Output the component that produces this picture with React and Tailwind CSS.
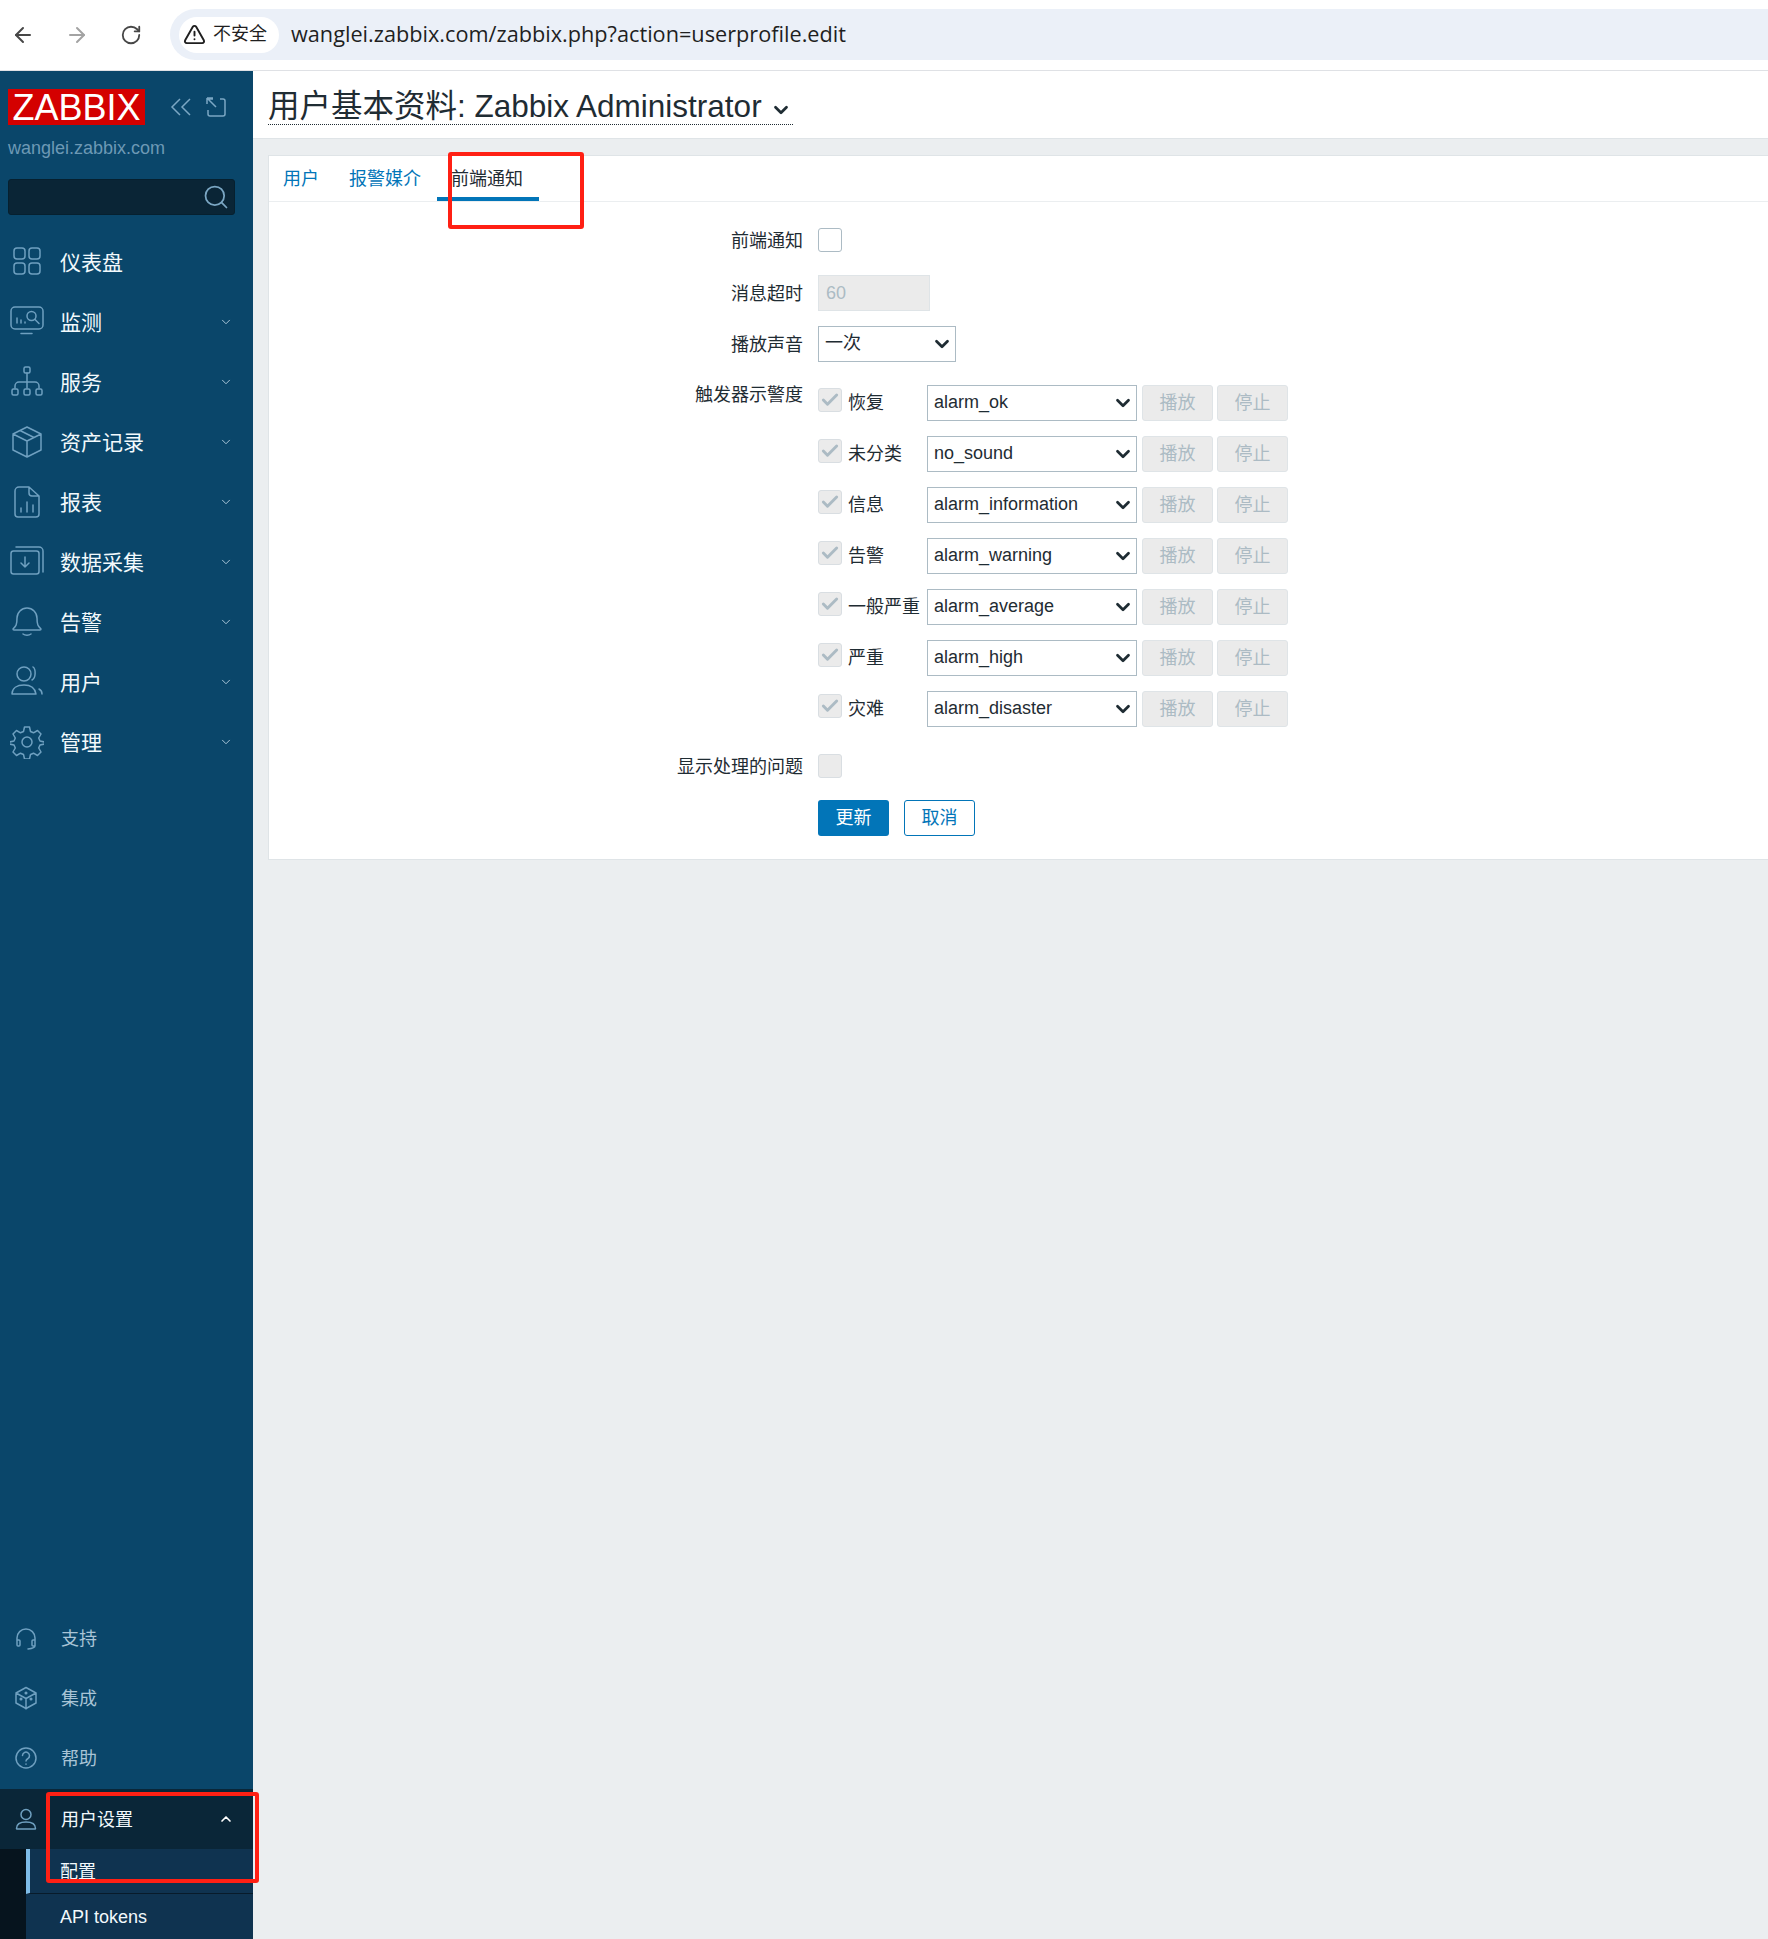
import { ArrowLeft, ArrowRight, RotateCw, TriangleAlert, Search, ChevronDown, ChevronUp, Check } from 'lucide-react'

const FONT = 'font-["Liberation_Sans","Noto_Sans_CJK_SC",sans-serif]'

function Ico({ children, size = 34, vb = 34 }) {
  return (
    <svg width={size} height={size} viewBox={`0 0 ${vb} ${vb}`} fill="none" stroke="#6fa0c0" strokeWidth="1.5" strokeLinecap="round" strokeLinejoin="round">
      {children}
    </svg>
  )
}

const NAV = [
  {
    label: '仪表盘',
    icon: (
      <>
        <rect x="4" y="3" width="11" height="11" rx="3" />
        <rect x="19" y="3" width="11" height="11" rx="3" />
        <rect x="4" y="18" width="11" height="11" rx="3" />
        <rect x="19" y="18" width="11" height="11" rx="3" />
      </>
    ),
  },
  {
    label: '监测',
    icon: (
      <>
        <rect x="1" y="2" width="32" height="22" rx="4" />
        <path d="M11 28.5h11M7 18v-5M11 18v-3M15 18v-1" />
        <circle cx="21.5" cy="11" r="4.5" />
        <path d="M25 14.5l4 4" />
      </>
    ),
  },
  {
    label: '服务',
    icon: (
      <>
        <rect x="14" y="2" width="6" height="6" rx="1.5" />
        <path d="M17 8v15M5 23v-2a4 4 0 0 1 4-4h16a4 4 0 0 1 4 4v2" />
        <rect x="2" y="24" width="6" height="6" rx="1.5" />
        <rect x="14" y="24" width="6" height="6" rx="1.5" />
        <rect x="26" y="24" width="6" height="6" rx="1.5" />
      </>
    ),
  },
  {
    label: '资产记录',
    icon: <path d="M17 2l14 7v16l-14 7-14-7V9zM3 9l14 7 14-7M17 16v16M10 5.500l14 7" />,
  },
  {
    label: '报表',
    icon: (
      <>
        <path d="M19 2H9a4 4 0 0 0-4 4v23a3 3 0 0 0 3 3h18a3 3 0 0 0 3-3V11zM19 2v6a3 3 0 0 0 3 3h7" />
        <path d="M11 27v-4M17 27v-10M23 27v-7" />
      </>
    ),
  },
  {
    label: '数据采集',
    icon: (
      <>
        <rect x="1" y="6" width="28" height="23" rx="2.500" />
        <path d="M6 2h23a4 4 0 0 1 4 4v21M15 12v10M11 18l4 4 4-4" />
      </>
    ),
  },
  {
    label: '告警',
    icon: (
      <>
        <path d="M3 24c3-3 4-4 4-11a10 10 0 0 1 20 0c0 7 1 8 4 11a1 1 0 0 1-1 1H4a1 1 0 0 1-1-1z" />
        <path d="M13 29c2 1.500 6 1.500 8 0" />
      </>
    ),
  },
  {
    label: '用户',
    icon: (
      <>
        <circle cx="14" cy="9" r="7" />
        <path d="M2 29c0-6 5-9 12-9s11 3 12 9zM23 2c3 2 3 11-1 13M29 24c2 1 3 3 3 5" />
      </>
    ),
  },
  {
    label: '管理',
    icon: (
      <>
        <circle cx="17" cy="17" r="5" />
        <path d="M14.500 2h5l1 4.500 3 1.300 4-2.300 3.500 3.500-2.300 4 1.300 3 4.500 1v2l-4.500 1-1.300 3 2.300 4-3.500 3.500-4-2.300-3 1.300-1 4.500h-5l-1-4.500-3-1.300-4 2.300-3.500-3.500 2.300-4-1.300-3-4.500-1v-2l4.500-1 1.300-3-2.300-4 3.500-3.500 4 2.300 3-1.300z" />
      </>
    ),
  },
]

const SOUNDS = [
  ['恢复', 'alarm_ok'],
  ['未分类', 'no_sound'],
  ['信息', 'alarm_information'],
  ['告警', 'alarm_warning'],
  ['一般严重', 'alarm_average'],
  ['严重', 'alarm_high'],
  ['灾难', 'alarm_disaster'],
]

function Box({ checked }) {
  return (
    <span className="flex h-[24px] w-[24px] items-center justify-center rounded-[3px] border border-[#d9dee2] bg-[#ebebeb]">
      {checked && <Check size={20} strokeWidth={3.5} className="text-[#acbbc4]" />}
    </span>
  )
}

function Select({ value, width }) {
  return (
    <div className={`relative h-[36px] ${width} shrink-0`}>
      <select
        defaultValue={value}
        className="h-full w-full appearance-none border border-[#acbbc4] bg-white pb-[2px] pl-[6px] text-[18px] text-[#1f2c33]"
      >
        <option>{value}</option>
      </select>
      <ChevronDown size={22} strokeWidth={3} className="pointer-events-none absolute right-[3px] top-[7px] text-[#1f2c33]" />
    </div>
  )
}

function GrayButton({ children }) {
  return (
    <span className="flex h-[36px] w-[71px] items-center justify-center rounded-[3px] border border-[#dfe4e7] bg-[#ebebeb] text-[18px] text-[#acbbc4]">
      {children}
    </span>
  )
}

function Row({ label, children, className = '' }) {
  return (
    <div className={`flex ${className}`}>
      <div className="h-[36px] w-[534px] shrink-0 text-right text-[18px] leading-[38px] text-[#1f2c33]">{label}</div>
      <div className="ml-[15px]">{children}</div>
    </div>
  )
}

function Sidebar() {
  return (
    <aside className="flex w-[253px] shrink-0 flex-col bg-[#0a466a]">
      <div className="flex items-center pl-[8px] pt-[18px]">
        <div className="flex h-[36px] w-[137px] items-center justify-center bg-[#d40000] pt-[2px] text-[36px] leading-none text-white">
          ZABBIX
        </div>
        <svg width="22" height="18" viewBox="0 0 22 18" fill="none" stroke="#7ba7c4" strokeWidth="1.5" className="ml-[25px]">
          <path d="M10 1L2 9l8 8M20 1l-8 8 8 8" />
        </svg>
        <svg width="20" height="20" viewBox="0 0 20 20" fill="none" stroke="#7ba7c4" strokeWidth="1.5" strokeLinejoin="round" className="ml-[14px]">
          <path d="M7 2H3a2 2 0 0 0-.5 0M14 2h3a2 2 0 0 1 2 2v13a2 2 0 0 1-2 2H4a2 2 0 0 1-2-2v-4M1 1l9 9M1 1v6M1 1h6" />
        </svg>
      </div>
      <div className="mt-[10px] pl-[8px] text-[18px] leading-[26px] text-[#6d99b5]">wanglei.zabbix.com</div>
      <div className="relative ml-[8px] mt-[18px] h-[36px] w-[227px] rounded-[3px] border border-[#06202f] bg-[#0a2536]">
        <Search size={28} strokeWidth={1.5} className="absolute right-[4px] top-[3px] text-[#7ba7c4]" />
      </div>
      <nav className="mt-[17px]">
        {NAV.map((n, i) => (
          <div key={n.label} className="flex h-[60px] items-center">
            <span className="ml-[10px] flex w-[34px] justify-center">
              <Ico>{n.icon}</Ico>
            </span>
            <span className="ml-[16px] pt-[2px] text-[21px] text-[#f2f9fc]">{n.label}</span>
            {i > 0 && <ChevronDown size={14} strokeWidth={1.6} className="ml-auto mr-[20px] text-[#b6cfdf]" />}
          </div>
        ))}
      </nav>

      <div className="mt-auto">
        <div className="flex h-[60px] items-center">
          <span className="ml-[14px] flex w-[24px] justify-center">
            <Ico size={24} vb={24}>
              <path d="M3 18v-6a9 9 0 0 1 18 0v6M3 14h2a1 1 0 0 1 1 1v4a1 1 0 0 1-1 1H4a1 1 0 0 1-1-1zM21 14h-2a1 1 0 0 0-1 1v4a1 1 0 0 0 1 1h2v-6zM21 20c0 2-3 2.500-7 3" />
            </Ico>
          </span>
          <span className="ml-[23px] pt-[2px] text-[18px] text-[#a9c4d6]">支持</span>
        </div>
        <div className="flex h-[60px] items-center">
          <span className="ml-[14px] flex w-[24px] justify-center">
            <Ico size={24} vb={24}>
              <path d="M12 1.500l10 5.500v10l-10 5.500L2 17V7zM2 7l10 5.500L22 7M12 12.500V23" />
              <circle cx="12" cy="7" r="0.8" />
              <circle cx="7" cy="13" r="0.8" />
              <circle cx="17" cy="13" r="0.8" />
            </Ico>
          </span>
          <span className="ml-[23px] pt-[2px] text-[18px] text-[#a9c4d6]">集成</span>
        </div>
        <div className="flex h-[60px] items-center">
          <span className="ml-[14px] flex w-[24px] justify-center">
            <Ico size={24} vb={24}>
              <circle cx="12" cy="12" r="10" />
              <path d="M8.500 9.500a3.500 3.500 0 1 1 5.500 3c-1.300.8-2 1.500-2 2.500M12 18v.2" />
            </Ico>
          </span>
          <span className="ml-[23px] pt-[2px] text-[18px] text-[#a9c4d6]">帮助</span>
        </div>
        <div className="mt-px flex h-[60px] items-center bg-[#0a2638]">
          <span className="ml-[14px] flex w-[24px] justify-center">
            <Ico size={24} vb={24}>
              <circle cx="12" cy="7.500" r="5" />
              <path d="M2.500 21.500c0-4.500 4-6.500 9.500-6.500s9.500 2 9.500 6.500a.5.5 0 0 1-.5.5H3a.5.5 0 0 1-.5-.5z" />
            </Ico>
          </span>
          <span className="ml-[23px] pt-[2px] text-[18px] text-[#f2f9fc]">用户设置</span>
          <ChevronUp size={16} strokeWidth={2.5} className="ml-auto mr-[19px] text-white" />
        </div>
        <div className="flex h-[90px]">
          <div className="w-[26px] bg-[#06141e]" />
          <div className="flex-1 bg-[#0f3350] text-[18px] text-[#f2f9fc]">
            <div className="flex h-[45px] items-center border-b border-[#081b2a] border-l-[4px] border-l-[#7ebce8] pl-[30px] pt-[2px]">配置</div>
            <div className="flex h-[45px] items-center pl-[34px] pt-[2px]">API tokens</div>
          </div>
        </div>
      </div>
    </aside>
  )
}

function Form() {
  return (
    <div className="pb-[23px] pt-[20px]">
      <Row label="前端通知">
        <div className="flex h-[36px] items-center">
          <span className="block h-[24px] w-[24px] rounded-[3px] border border-[#acbbc4] bg-white" />
        </div>
      </Row>
      <Row label="消息超时" className="mt-[17px]">
        <div className="flex h-[36px] w-[112px] items-center border border-[#dfe4e7] bg-[#ebebeb] pl-[7px] text-[18px] text-[#acbbc4]">60</div>
      </Row>
      <Row label="播放声音" className="mt-[15px]">
        <Select value="一次" width="w-[138px]" />
      </Row>
      <Row label={<span className="relative -top-[9px]">触发器示警度</span>} className="mt-[23px]">
        <div className="flex flex-col gap-[15px]">
          {SOUNDS.map(([label, sound]) => (
            <div key={label} className="flex h-[36px]">
              <span className="mt-[3px]">
                <Box checked />
              </span>
              <span className="ml-[6px] w-[79px] shrink-0 text-[18px] leading-[36px] text-[#1f2c33]">{label}</span>
              <Select value={sound} width="w-[210px]" />
              <div className="ml-[5px] flex gap-[4px]">
                <GrayButton>播放</GrayButton>
                <GrayButton>停止</GrayButton>
              </div>
            </div>
          ))}
        </div>
      </Row>
      <Row label="显示处理的问题" className="mt-[21px]">
        <div className="flex h-[36px] items-center">
          <Box />
        </div>
      </Row>
      <Row label="" className="mt-[16px]">
        <div className="flex gap-[15px] text-[18px]">
          <button className="h-[36px] w-[71px] rounded-[3px] bg-[#0275b8] text-white">更新</button>
          <button className="h-[36px] w-[71px] rounded-[3px] border border-[#0275b8] bg-white text-[#0275b8]">取消</button>
        </div>
      </Row>
    </div>
  )
}

export default function App() {
  return (
    <div className={`relative flex h-[1939px] w-[1768px] flex-col overflow-hidden bg-[#ebeef0] ${FONT}`}>
      {/* browser chrome */}
      <div className="flex h-[71px] shrink-0 items-center border-b border-[#dfe1e5] bg-white pb-[1px]">
        <ArrowLeft size={24} strokeWidth={2} className="ml-[11px] text-[#474747]" />
        <ArrowRight size={24} strokeWidth={2} className="ml-[30px] text-[#a3a3a3]" />
        <RotateCw size={22} strokeWidth={2} className="ml-[31px] text-[#474747]" />
        <div className="ml-[28px] flex h-[51px] flex-1 items-center rounded-l-full bg-[#ebf0f8] pl-[9px]">
          <div className="flex h-[36px] w-[100px] items-center rounded-full bg-white pl-[4px] text-[18px] text-[#1f1f1f]">
            <TriangleAlert size={23} strokeWidth={2} />
            <span className="ml-[7px]">不安全</span>
          </div>
          <span className="ml-[12px] font-['Open_Sans',sans-serif] text-[21.7px] text-[#1f1f1f]">wanglei.zabbix.com/zabbix.php?action=userprofile.edit</span>
        </div>
      </div>

      <div className="flex min-h-0 flex-1">
        <Sidebar />
        <main className="flex-1">
          <header className="h-[68px] border-b border-[#dfe4e7] bg-white pl-[15px] pt-[13px]">
            <div className="flex h-[41px] w-[525px] items-center border-b border-dotted border-[#1f2c33] pt-[5px] text-[31.5px] leading-none text-[#1f2c33]">
              用户基本资料: Zabbix Administrator
              <ChevronDown size={22} strokeWidth={3} className="ml-[8px] mt-[6px]" />
            </div>
          </header>
          <section className="ml-[15px] mt-[16px] border border-r-0 border-[#dfe4e7] bg-white">
            <div className="flex h-[46px] border-b border-[#ebeef0] pl-[14px] text-[18px] text-[#0275b8]">
              <span className="pt-[10px]">用户</span>
              <span className="ml-[30px] pt-[10px]">报警媒介</span>
              <div className="ml-[16px] w-[102px] border-b-[4px] border-[#0275b8] pl-[14px] pt-[10px] text-[#1f2c33]">前端通知</div>
            </div>
            <Form />
          </section>
        </main>
      </div>

      {/* annotation boxes */}
      <div className="absolute left-[448px] top-[152px] h-[77px] w-[136px] rounded-[3px] border-[4px] border-[#ff2014]" />
      <div className="absolute left-[46px] top-[1792px] h-[91px] w-[213px] rounded-[3px] border-[4px] border-[#ff2014]" />
    </div>
  )
}
